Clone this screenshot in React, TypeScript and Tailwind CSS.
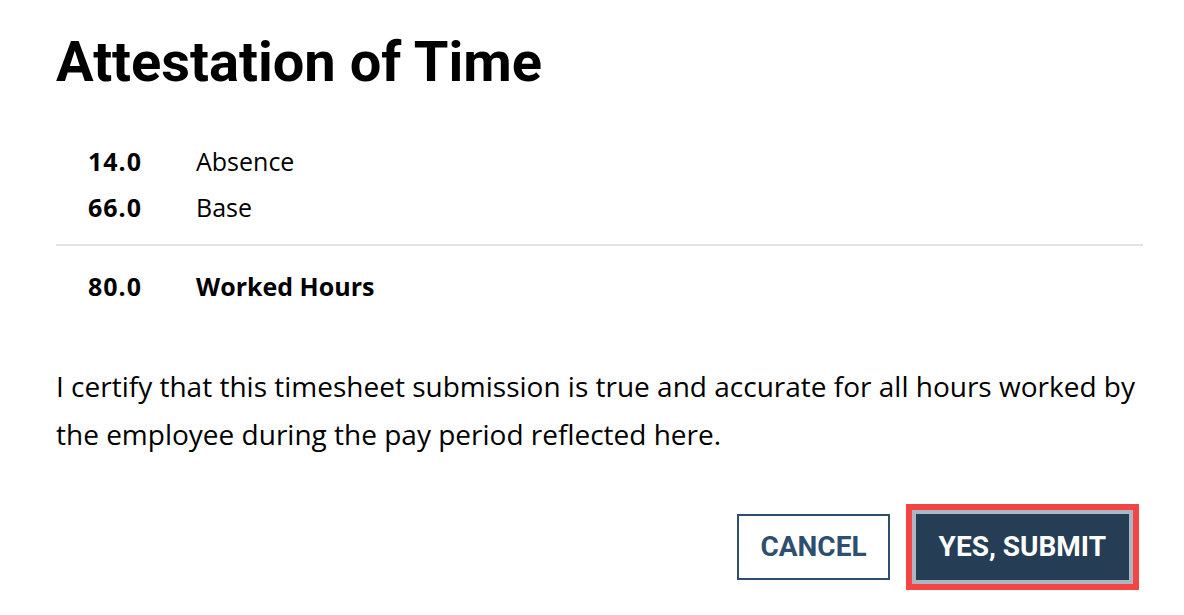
const rows = [
  { hours: '14.0', label: 'Absence' },
  { hours: '66.0', label: 'Base' },
] as const

export default function App() {
  return (
    <div className="min-h-screen bg-white pl-[56px] pr-[41px] pt-[29px] text-black" style={{ fontFamily: '"Open Sans", sans-serif' }}>
      <h1 className="text-[56px] font-bold leading-[1.2]" style={{ fontFamily: 'Roboto, sans-serif' }}>
        Attestation of Time
      </h1>

      <div className="mt-[42px] text-[25px] leading-[46px]">
        {rows.map((row) => (
          <div key={row.label} className="flex pl-[32px]">
            <span className="w-[108px] font-bold tracking-[1px]">{row.hours}</span>
            <span>{row.label}</span>
          </div>
        ))}
        <div className="mt-[14px] h-[2px] bg-[#e3e3e3]" />
        <div className="mt-[17px] flex pl-[32px] font-bold">
          <span className="w-[108px] tracking-[1px]">80.0</span>
          <span>Worked Hours</span>
        </div>
      </div>

      <p className="mt-[53px] text-[28px] leading-[48px]">
        I certify that this timesheet submission is true and accurate for all hours worked by the employee during the pay period reflected here.
      </p>

      <div className="mt-[56px] flex justify-end gap-[26px] pr-[14px]" style={{ fontFamily: 'Roboto, sans-serif' }}>
        <button className="h-[66px] border-2 border-[#2e4f6f] bg-white px-[21px] text-[28px] font-bold text-[#2e4f6f]">
          CANCEL
        </button>
        <button className="h-[66px] bg-[#253d55] px-[23px] text-[28px] font-bold text-white shadow-[0_0_0_4px_#a9b6c3,0_0_0_10px_#f54444]">
          YES, SUBMIT
        </button>
      </div>
    </div>
  )
}
